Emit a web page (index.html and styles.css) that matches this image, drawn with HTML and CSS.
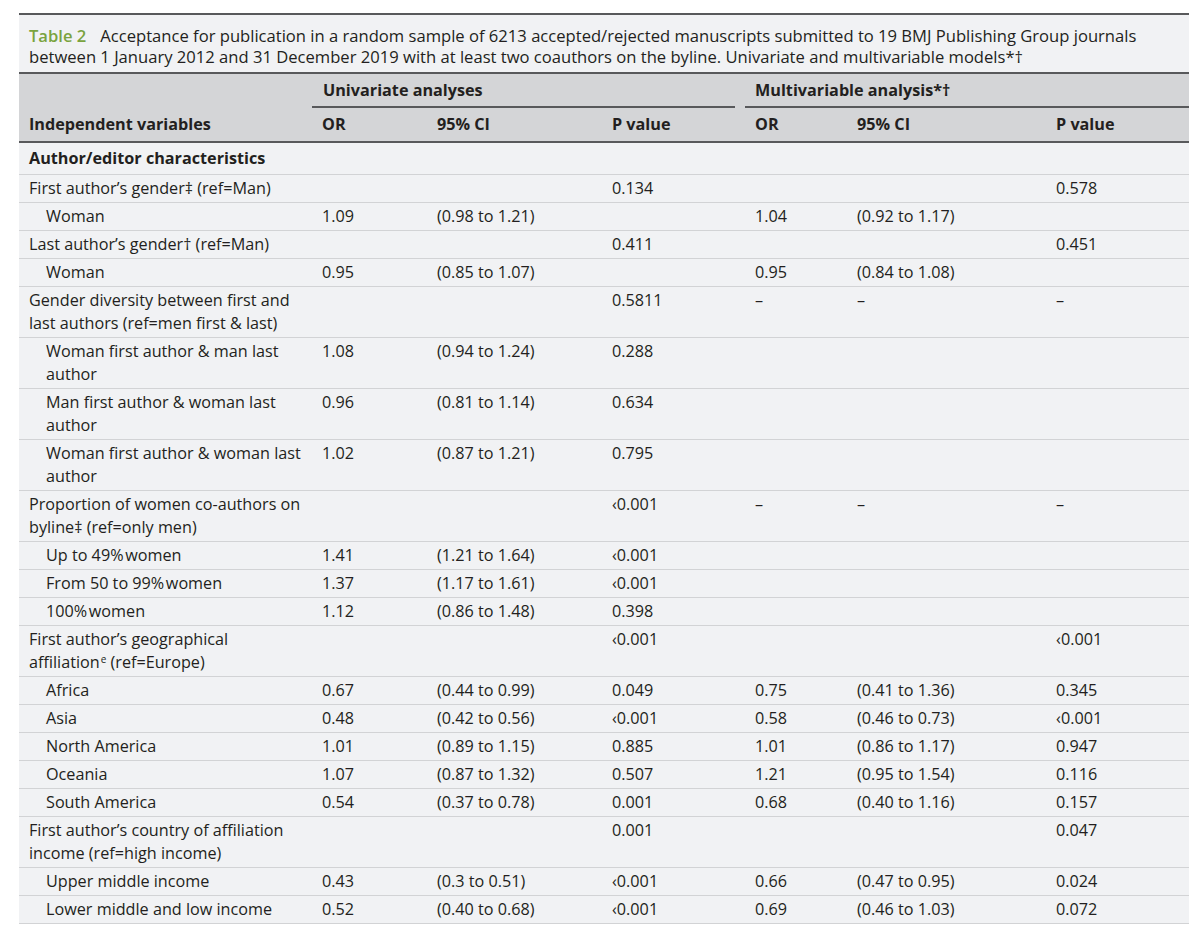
FILE: index.html
```html
<!DOCTYPE html>
<html lang="en">
<head>
<meta charset="utf-8">
<link rel="stylesheet" href="styles.css">
</head>
<body>
<div class="wrap">
  <div class="caption"><span class="label">Table 2</span><span class="ctext">Acceptance for publication in a random sample of 6213 accepted/rejected manuscripts submitted to 19 BMJ Publishing Group journals between 1 January 2012 and 31 December 2019 with at least two coauthors on the byline. Univariate and multivariable models*†</span></div>
  <table class="tbl">
    <colgroup>
      <col class="c1"><col class="c2"><col class="c3"><col class="c4"><col class="c5"><col class="c6"><col class="c7">
    </colgroup>
    <thead>
      <tr class="h1">
        <th rowspan="2" class="var">Independent variables</th>
        <th colspan="3" class="grp uni"><div class="grpline">Univariate analyses</div></th>
        <th colspan="3" class="grp multi"><div class="grpline">Multivariable analysis*†</div></th>
      </tr>
      <tr class="h2">
        <th>OR</th><th>95% CI</th><th>P value</th>
        <th>OR</th><th>95% CI</th><th>P value</th>
      </tr>
    </thead>
    <tbody>
      <tr class="section"><td colspan="7">Author/editor characteristics</td></tr>
      <tr><td>First author’s gender‡ (ref=Man)</td><td></td><td></td><td>0.134</td><td></td><td></td><td>0.578</td></tr>
      <tr><td class="ind">Woman</td><td>1.09</td><td>(0.98 to 1.21)</td><td></td><td>1.04</td><td>(0.92 to 1.17)</td><td></td></tr>
      <tr><td>Last author’s gender† (ref=Man)</td><td></td><td></td><td>0.411</td><td></td><td></td><td>0.451</td></tr>
      <tr><td class="ind">Woman</td><td>0.95</td><td>(0.85 to 1.07)</td><td></td><td>0.95</td><td>(0.84 to 1.08)</td><td></td></tr>
      <tr><td>Gender diversity between first and last authors (ref=men first &amp; last)</td><td></td><td></td><td>0.5811</td><td>–</td><td>–</td><td>–</td></tr>
      <tr><td class="ind">Woman first author &amp; man last author</td><td>1.08</td><td>(0.94 to 1.24)</td><td>0.288</td><td></td><td></td><td></td></tr>
      <tr><td class="ind">Man first author &amp; woman last author</td><td>0.96</td><td>(0.81 to 1.14)</td><td>0.634</td><td></td><td></td><td></td></tr>
      <tr><td class="ind">Woman first author &amp; woman last author</td><td>1.02</td><td>(0.87 to 1.21)</td><td>0.795</td><td></td><td></td><td></td></tr>
      <tr><td>Proportion of women co-authors on byline‡ (ref=only men)</td><td></td><td></td><td>‹0.001</td><td>–</td><td>–</td><td>–</td></tr>
      <tr><td class="ind">Up to 49%&#8202;women</td><td>1.41</td><td>(1.21 to 1.64)</td><td>‹0.001</td><td></td><td></td><td></td></tr>
      <tr><td class="ind">From 50 to 99%&#8202;women</td><td>1.37</td><td>(1.17 to 1.61)</td><td>‹0.001</td><td></td><td></td><td></td></tr>
      <tr><td class="ind">100%&#8202;women</td><td>1.12</td><td>(0.86 to 1.48)</td><td>0.398</td><td></td><td></td><td></td></tr>
      <tr><td>First author’s geographical affiliation<span class="sup">e</span> (ref=Europe)</td><td></td><td></td><td>‹0.001</td><td></td><td></td><td>‹0.001</td></tr>
      <tr><td class="ind">Africa</td><td>0.67</td><td>(0.44 to 0.99)</td><td>0.049</td><td>0.75</td><td>(0.41 to 1.36)</td><td>0.345</td></tr>
      <tr><td class="ind">Asia</td><td>0.48</td><td>(0.42 to 0.56)</td><td>‹0.001</td><td>0.58</td><td>(0.46 to 0.73)</td><td>‹0.001</td></tr>
      <tr><td class="ind">North America</td><td>1.01</td><td>(0.89 to 1.15)</td><td>0.885</td><td>1.01</td><td>(0.86 to 1.17)</td><td>0.947</td></tr>
      <tr><td class="ind">Oceania</td><td>1.07</td><td>(0.87 to 1.32)</td><td>0.507</td><td>1.21</td><td>(0.95 to 1.54)</td><td>0.116</td></tr>
      <tr><td class="ind">South America</td><td>0.54</td><td>(0.37 to 0.78)</td><td>0.001</td><td>0.68</td><td>(0.40 to 1.16)</td><td>0.157</td></tr>
      <tr><td>First author’s country of affiliation income (ref=high income)</td><td></td><td></td><td>0.001</td><td></td><td></td><td>0.047</td></tr>
      <tr><td class="ind">Upper middle income</td><td>0.43</td><td>(0.3 to 0.51)</td><td>‹0.001</td><td>0.66</td><td>(0.47 to 0.95)</td><td>0.024</td></tr>
      <tr><td class="ind">Lower middle and low income</td><td>0.52</td><td>(0.40 to 0.68)</td><td>‹0.001</td><td>0.69</td><td>(0.46 to 1.03)</td><td>0.072</td></tr>
    </tbody>
  </table>
</div>
</body>
</html>
```

FILE: styles.css
```css
html, body {
  margin: 0;
  padding: 0;
  background: #ffffff;
}
body {
  font-family: "Open Sans", "Noto Sans", "Liberation Sans", sans-serif;
  color: #231f20;
  font-size: 16.2px;
}
.wrap {
  width: 1170px;
  margin: 13px 0 0 19px;
  background: #f1f2f4;
  border-top: 2px solid #58595b;
}
.caption {
  padding: 10px 10px 5px 10px;
  line-height: 21px;
  font-size: 16.6px;
  border-bottom: 2px solid #58595b;
}
.caption .label {
  display: inline-block;
  color: #7aa33e;
  font-weight: 600;
  margin-right: 14px;
}
.tbl {
  width: 1170px;
  border-collapse: collapse;
  table-layout: fixed;
}
.c1 { width: 293px; }
.c2 { width: 115px; }
.c3 { width: 175px; }
.c4 { width: 143px; }
.c5 { width: 102px; }
.c6 { width: 199px; }
.c7 { width: 143px; }
thead th {
  background: #d4d5d7;
  font-weight: 700;
  text-align: left;
  padding: 0 10px;
  height: 33px;
  line-height: 23px;
}
.h2 th {
  vertical-align: middle;
  border-bottom: 2px solid #58595b;
}
th.var {
  vertical-align: bottom;
  padding-bottom: 5px;
  border-bottom: 2px solid #58595b;
}
th.grp {
  padding: 0;
  vertical-align: bottom;
}
th.uni { padding-right: 10px; }
.grpline {
  border-bottom: 2px solid #58595b;
  padding: 5px 0 4px 11px;
}
th.multi .grpline { padding-left: 10px; }
tbody td {
  padding: 2px 10px 2px 10px;
  line-height: 23px;
  vertical-align: top;
  border-bottom: 1px solid #d2d3d5;
}
tbody td.ind { padding-left: 27px; }
tr.section td {
  font-weight: 700;
  padding-top: 4px;
  padding-bottom: 4px;
}
.sup {
  font-size: 10px;
  line-height: 10px;
  vertical-align: 5px;
  margin-left: 1px;
}
```
